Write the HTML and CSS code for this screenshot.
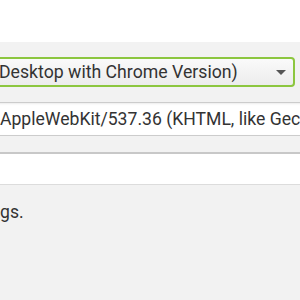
FILE: index.html
```html
<!DOCTYPE html>
<html>
<head>
<meta charset="utf-8">
<link rel="stylesheet" href="styles.css">
</head>
<body>
<div class="top"></div>
<div class="main">
  <div class="select">
    <span class="select-text">Desktop with Chrome Version)</span>
    <span class="caret"></span>
  </div>
  <div class="input"><span class="input-text">AppleWebKit/537.36 (KHTML, like Gecko)</span></div>
  <div class="panel"></div>
  <p class="note">gs.</p>
</div>
</body>
</html>
```
FILE: styles.css
```css
html, body {
  margin: 0;
  padding: 0;
  width: 300px;
  height: 300px;
  overflow: hidden;
  background: #f2f2f2;
  font-family: Roboto, "Liberation Sans", sans-serif;
  color: #333;
}
.top {
  height: 42px;
  background: #fff;
}
.main {
  padding-top: 15px;
  overflow: hidden;
}
.select {
  box-sizing: border-box;
  height: 30px;
  width: 300px;
  margin-left: -5px;
  border: 2px solid #8cc63f;
  border-radius: 4px;
  background: linear-gradient(#fafafa, #ececec);
  display: flex;
  align-items: center;
  justify-content: space-between;
  padding: 0 7px 0 0;
}
.select-text {
  font-size: 17.7px;
  color: #333;
  white-space: nowrap;
  margin-left: 2px;
}
.caret {
  width: 0;
  height: 0;
  border-left: 5px solid transparent;
  border-right: 5px solid transparent;
  border-top: 5px solid #555;
}
.input {
  box-sizing: border-box;
  margin-top: 15px;
  height: 34px;
  margin-left: -4px;
  margin-right: -20px;
  background: #fff;
  border: 1px solid #ccc;
  box-shadow: inset 0 1px 2px rgba(0,0,0,0.08);
  display: flex;
  align-items: center;
  overflow: hidden;
  white-space: nowrap;
}
.input-text {
  font-size: 17.6px;
  color: #333;
  margin-left: 3px;
}
.panel {
  margin-top: 16px;
  height: 33px;
  background: #fff;
  border-top: 2px solid #c8c8c8;
  border-bottom: 1px solid #dcdcdc;
  box-sizing: border-box;
}
.note {
  margin: 17px 0 0 0;
  font-size: 17.6px;
  color: #333;
  line-height: 20px;
}
```
